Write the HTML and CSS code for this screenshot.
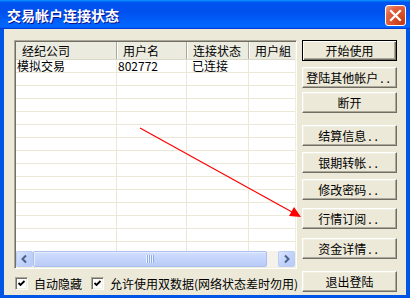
FILE: index.html
```html
<!DOCTYPE html>
<html lang="zh-CN">

<head>
  <meta charset="UTF-8">
  <title>交易帐户连接状态</title>
  <link rel="stylesheet" href="styles.css">
</head>

<body>
  <div class="window">
    <div class="titlebar">
      <span class="title">交易帐户连接状态</span>
      <span class="close">
        <svg width="19" height="19" viewBox="0 0 19 19">
          <path d="M5 5 L14 14 M14 5 L5 14" stroke="#fff" stroke-width="2.2" stroke-linecap="square" />
        </svg>
      </span>
    </div>

    <div class="client">
      <div class="main">
        <div class="list">
          <div class="list-head">
            <div class="col c1">经纪公司</div>
            <div class="col c2">用户名</div>
            <div class="col c3">连接状态</div>
            <div class="col c4">用户組</div>
          </div>
          <div class="list-body">
            <div class="row">
              <div class="cell c1">模拟交易</div>
              <div class="cell c2">802772</div>
              <div class="cell c3">已连接</div>
              <div class="cell c4"></div>
            </div>
            <div class="row"><div class="cell c1"></div><div class="cell c2"></div><div class="cell c3"></div><div class="cell c4"></div></div>
            <div class="row"><div class="cell c1"></div><div class="cell c2"></div><div class="cell c3"></div><div class="cell c4"></div></div>
            <div class="row"><div class="cell c1"></div><div class="cell c2"></div><div class="cell c3"></div><div class="cell c4"></div></div>
            <div class="row"><div class="cell c1"></div><div class="cell c2"></div><div class="cell c3"></div><div class="cell c4"></div></div>
            <div class="row"><div class="cell c1"></div><div class="cell c2"></div><div class="cell c3"></div><div class="cell c4"></div></div>
            <div class="row"><div class="cell c1"></div><div class="cell c2"></div><div class="cell c3"></div><div class="cell c4"></div></div>
            <div class="row"><div class="cell c1"></div><div class="cell c2"></div><div class="cell c3"></div><div class="cell c4"></div></div>
            <div class="row"><div class="cell c1"></div><div class="cell c2"></div><div class="cell c3"></div><div class="cell c4"></div></div>
            <div class="row"><div class="cell c1"></div><div class="cell c2"></div><div class="cell c3"></div><div class="cell c4"></div></div>
            <div class="row"><div class="cell c1"></div><div class="cell c2"></div><div class="cell c3"></div><div class="cell c4"></div></div>
            <div class="row"><div class="cell c1"></div><div class="cell c2"></div><div class="cell c3"></div><div class="cell c4"></div></div>
            <div class="row"><div class="cell c1"></div><div class="cell c2"></div><div class="cell c3"></div><div class="cell c4"></div></div>
            <div class="row"><div class="cell c1"></div><div class="cell c2"></div><div class="cell c3"></div><div class="cell c4"></div></div>
            <div class="row"><div class="cell c1"></div><div class="cell c2"></div><div class="cell c3"></div><div class="cell c4"></div></div>
          </div>
          <div class="hscroll">
            <span class="sb-btn">
              <svg width="15" height="14" viewBox="0 0 15 14"><path d="M9 3.5 L5.5 7 L9 10.5" fill="none" stroke="#4d6185" stroke-width="2" /></svg>
            </span>
            <span class="thumb"><span class="grip"></span></span>
            <span class="track"></span>
            <span class="sb-btn">
              <svg width="15" height="14" viewBox="0 0 15 14"><path d="M6 3.5 L9.5 7 L6 10.5" fill="none" stroke="#4d6185" stroke-width="2" /></svg>
            </span>
          </div>
        </div>

        <div class="options">
          <label class="check">
            <span class="box"><svg width="9" height="9" viewBox="0 0 9 9"><path d="M1.5 4 L3.5 6 L7.5 2" fill="none" stroke="#000" stroke-width="1.8" /></svg></span>
            自动隐藏
          </label>
          <label class="check">
            <span class="box"><svg width="9" height="9" viewBox="0 0 9 9"><path d="M1.5 4 L3.5 6 L7.5 2" fill="none" stroke="#000" stroke-width="1.8" /></svg></span>
            允许使用双数据(网络状态差时勿用)
          </label>
        </div>
      </div>

      <div class="buttons">
        <button class="btn default">开始使用</button>
        <button class="btn g6">登陆其他帐户<span class="dots">..</span></button>
        <button class="btn g4">断开</button>
        <button class="btn g12">结算信息<span class="dots">..</span></button>
        <button class="btn g6">银期转帐<span class="dots">..</span></button>
        <button class="btn g6">修改密码<span class="dots">..</span></button>
        <button class="btn g8">行情订阅<span class="dots">..</span></button>
        <button class="btn g9">资金详情<span class="dots">..</span></button>
        <button class="btn g12">退出登陆</button>
      </div>
    </div>

    <!-- 标注箭头 -->
    <svg class="arrow" width="410" height="298" viewBox="0 0 410 298">
      <line x1="140" y1="128" x2="292" y2="212" stroke="#ff0000" stroke-width="1.2" />
      <polygon points="301,217 289,216 294,207" fill="#ff0000" />
    </svg>
  </div>
</body>

</html>
```

FILE: styles.css
```css
* {
  box-sizing: border-box;
}
body {
  margin: 0;
  font-family: "Noto Sans CJK SC", "Liberation Sans", sans-serif;
  font-size: 12px;
  color: #000;
}
.window {
  position: relative;
  width: 410px;
  height: 298px;
  display: flex;
  flex-direction: column;
}

/* title bar */
.titlebar {
  height: 29px;
  flex: none;
  display: flex;
  align-items: center;
  justify-content: space-between;
  padding: 0 4px 0 7px;
  background: linear-gradient(180deg, #0997ff, #0053ee 8%, #0050ee 40%, #0066ff 88%, #0066ff 93%, #005bff 95%, #003dd7 96%, #003dd7);
}
.title {
  color: #fff;
  font-size: 14px;
  font-weight: bold;
  line-height: 14px;
  text-shadow: 1px 1px #0f1089;
}
.close {
  width: 21px;
  height: 21px;
  margin-top: 2px;
  display: flex;
  align-items: center;
  justify-content: center;
  border: 1px solid #fff;
  border-radius: 3px;
  background: radial-gradient(circle at 85% 85%, #c83a12 0, #dc5530 50%, #e2684a 72%, #f2a68f 100%);
}

/* client area */
.client {
  flex: 1;
  display: flex;
  gap: 5px;
  padding: 11px 9px 0 10px;
  background: #ece9d8;
  border: solid #0055e5;
  border-width: 0 4px 3px;
}
.main {
  width: 283px;
  flex: none;
}

/* list view */
.list {
  height: 229px;
  display: flex;
  flex-direction: column;
  background: #fff;
  border: 1px solid;
  border-color: #aca899 #fff #fff #aca899;
  box-shadow: inset 1px 1px #716f64, inset -1px -1px #f1efe2;
  padding: 1px;
  overflow: hidden;
}
.list-head {
  height: 18px;
  flex: none;
  display: flex;
  background: #ecebdf;
  border-bottom: 1px solid #dcd8c8;
}
.col {
  line-height: 17px;
  padding-left: 5px;
  border-left: 1px solid #fff;
  border-right: 1px solid #aca899;
  white-space: nowrap;
  flex: none;
}
.col.c1 {
  border-left: 0;
  padding-left: 6px;
}
.c1 { width: 101px; }
.c2 { width: 70px; }
.c3 { width: 62px; }
.c4 { width: 60px; }
.list-body {
  flex: 1;
  overflow: hidden;
}
.row {
  display: flex;
  height: 13px;
  border-bottom: 1px solid #ebe8d8;
}
.cell {
  flex: none;
  line-height: 12px;
  padding-left: 1px;
  border-right: 1px solid #ebe8d8;
  white-space: nowrap;
}
.cell.c3 {
  padding-left: 5px;
}

/* scroll bar */
.hscroll {
  height: 16px;
  flex: none;
  display: flex;
  background: #f4f2ea;
}
.sb-btn {
  width: 17px;
  display: flex;
  align-items: center;
  justify-content: center;
  border: 1px solid #bccdf5;
  border-radius: 2px;
  background: linear-gradient(135deg, #dbe5fd, #c2d3fc 50%, #b7caf6);
}
.thumb {
  width: 234px;
  display: flex;
  align-items: center;
  justify-content: center;
  border: 1px solid #a9bff0;
  border-radius: 2px;
  background: linear-gradient(180deg, #d2defc, #c4d5fc 50%, #b9cbf7);
  box-shadow: inset 1px 1px #e6eefe;
}
.grip {
  width: 8px;
  height: 8px;
  background: repeating-linear-gradient(90deg, #eef4fe 0, #eef4fe 1px, #8cabf0 1px, #8cabf0 2px);
}
.track {
  flex: 1;
}

/* check boxes */
.options {
  display: flex;
  gap: 9px;
  margin-top: 8px;
  padding-left: 1px;
}
.check {
  display: flex;
  align-items: center;
  gap: 6px;
  line-height: 13px;
  white-space: nowrap;
}
.box {
  width: 13px;
  height: 13px;
  display: flex;
  align-items: center;
  justify-content: center;
  background: #fff;
  border: 1px solid;
  border-color: #aca899 #fff #fff #aca899;
  box-shadow: inset 1px 1px #716f64, inset -1px -1px #f1efe2;
}

/* buttons */
.buttons {
  width: 95px;
  flex: none;
  display: flex;
  flex-direction: column;
}
.btn {
  height: 21px;
  padding: 0;
  font: inherit;
  font-size: 12px;
  line-height: 12px;
  color: #000;
  background: #ece9d8;
  border: 1px solid;
  border-color: #fff #716f64 #716f64 #fff;
  box-shadow: inset -1px -1px #aca899, inset 1px 1px #f1efe2;
}
.btn.default {
  border-color: #000;
  box-shadow: inset 1px 1px #fff, inset -1px -1px #716f64, inset -2px -2px #aca899;
}
.dots {
  letter-spacing: 3px;
  margin-left: 2px;
}
.g4 { margin-top: 4px; }
.g6 { margin-top: 6px; }
.g8 { margin-top: 8px; }
.g9 { margin-top: 9px; }
.g12 { margin-top: 12px; }

/* annotation */
.arrow {
  position: absolute;
  left: 0;
  top: 0;
  pointer-events: none;
}
```
